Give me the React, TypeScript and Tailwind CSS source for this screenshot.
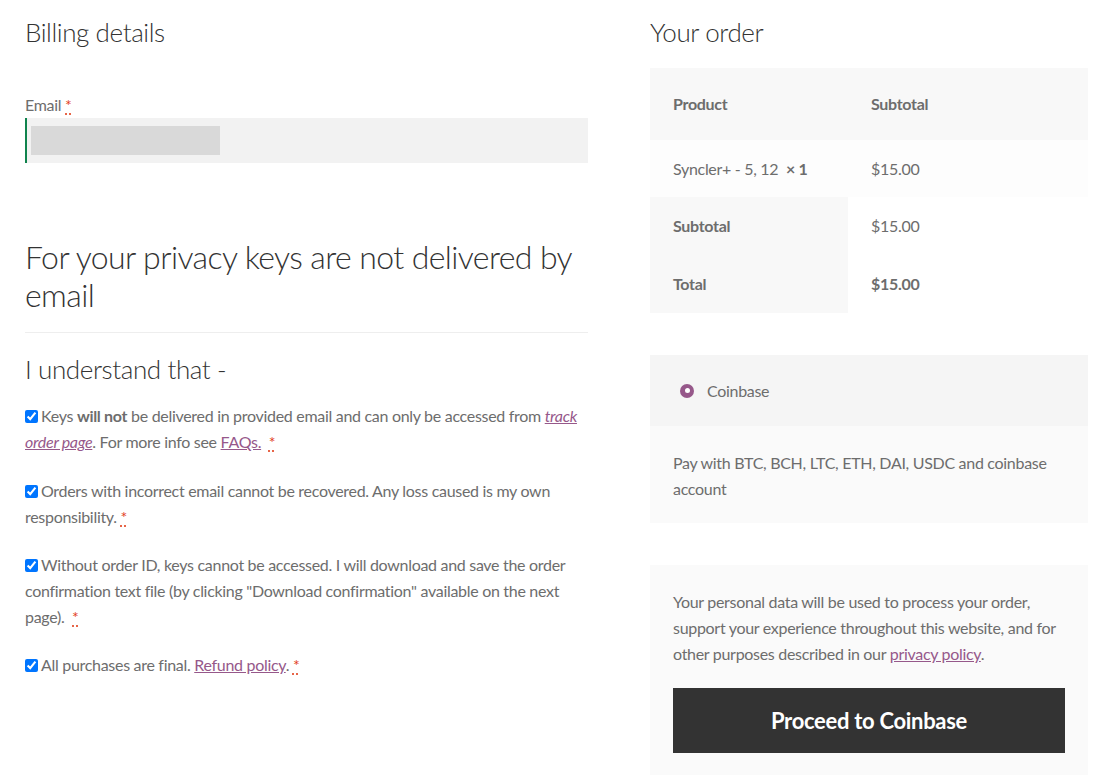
import React from "react";

const Req = () => (
  <abbr
    title="required"
    className="text-[#e2401c] underline decoration-dotted decoration-[#e2401c] underline-offset-[3px] cursor-help"
  >
    *
  </abbr>
);

const Check = () => (
  <input type="checkbox" defaultChecked readOnly className="mr-[3px] align-[-1px] w-[13px] h-[13px]" />
);

export default function App() {
  return (
    <div
      className="w-[1101px] h-[780px] overflow-hidden bg-white text-[#6d6d6d] text-[16px] leading-[26px] tracking-[-0.3px] flex gap-[62px] pl-[25px] pt-[16px]"
      style={{ fontFamily: "Lato, 'Noto Sans', sans-serif" }}
    >
      {/* Left column */}
      <div className="w-[563px] shrink-0 flex flex-col">
        <h3 className="text-[26px] leading-[32px] font-light text-[#333] tracking-[-0.4px]">Billing details</h3>
        <label className="mt-[44px] block">
          Email <Req />
        </label>
        <div className="h-[45px] bg-[#f2f2f2] border-l-[2px] border-[#0f834d] flex items-center pl-[4px]">
          <div className="w-[189px] h-[29px] bg-[#d9d9d9]" />
        </div>
        <h2 className="mt-[75px] text-[32px] leading-[38px] font-light text-[#333] tracking-[-0.6px]">
          For your privacy keys are not delivered by email
        </h2>
        <hr className="mt-[18px] border-0 border-t border-[#eeeeee]" />
        <h3 className="mt-[20px] text-[26px] leading-[32px] font-light text-[#333] tracking-[-0.4px]">I understand that -</h3>
        <p className="mt-[18px]">
          <Check />
          Keys <strong className="font-bold">will not</strong> be delivered in provided email and can only be accessed from{" "}
          <a href="#" className="text-[#96588a] underline italic">track order page</a>. For more info see{" "}
          <a href="#" className="text-[#96588a] underline">FAQs.</a>&nbsp; <Req />
        </p>
        <p className="mt-[23px]">
          <Check />
          Orders with incorrect email cannot be recovered. Any loss caused is my own responsibility. <Req />
        </p>
        <p className="mt-[22px]">
          <Check />
          Without order ID, keys cannot be accessed. I will download and save the order confirmation text file (by clicking "Download confirmation" available on the next page).&nbsp; <Req />
        </p>
        <p className="mt-[22px]">
          <Check />
          All purchases are final. <a href="#" className="text-[#96588a] underline">Refund policy</a>. <Req />
        </p>
      </div>

      {/* Right column */}
      <div className="w-[438px] shrink-0 flex flex-col">
        <h3 className="text-[26px] leading-[32px] font-light text-[#333] tracking-[-0.4px]">Your order</h3>
        <div className="mt-[20px] flex flex-col">
          <div className="h-[72px] bg-[#f8f8f8] flex items-center font-bold">
            <div className="w-[198px] pl-[23px]">Product</div>
            <div className="pl-[23px]">Subtotal</div>
          </div>
          <div className="h-[57px] bg-[#fdfdfd] flex items-center">
            <div className="w-[198px] pl-[23px]">
              Syncler+ - 5, 12&nbsp; <strong className="font-bold">× 1</strong>
            </div>
            <div className="pl-[23px]">$15.00</div>
          </div>
          <div className="h-[58px] flex">
            <div className="w-[198px] pl-[23px] bg-[#f8f8f8] flex items-center font-bold">Subtotal</div>
            <div className="pl-[23px] flex items-center">$15.00</div>
          </div>
          <div className="h-[58px] flex">
            <div className="w-[198px] pl-[23px] bg-[#f8f8f8] flex items-center font-bold">Total</div>
            <div className="pl-[23px] flex items-center font-bold">$15.00</div>
          </div>
        </div>

        <div className="mt-[42px] flex flex-col">
          <div className="h-[71px] bg-[#f5f5f5] flex items-center pl-[30px]">
            <span className="w-[14px] h-[14px] rounded-full bg-[#96588a] flex items-center justify-center mr-[13px]">
              <span className="w-[5px] h-[5px] rounded-full bg-white" />
            </span>
            <span>Coinbase</span>
          </div>
          <div className="h-[97px] bg-[#fafafa] px-[23px] pt-[24px]">
            Pay with BTC, BCH, LTC, ETH, DAI, USDC and coinbase account
          </div>
        </div>

        <div className="mt-[42px] bg-[#fafafa] px-[23px] pt-[24px] pb-[22px]">
          <p>
            Your personal data will be used to process your order, support your experience throughout this website, and for other purposes described in our{" "}
            <a href="#" className="text-[#96588a] underline">privacy policy</a>.
          </p>
          <button className="mt-[21px] w-full h-[65px] bg-[#333333] text-white text-[22px] font-bold tracking-[-0.3px]">
            Proceed to Coinbase
          </button>
        </div>
      </div>
    </div>
  );
}
